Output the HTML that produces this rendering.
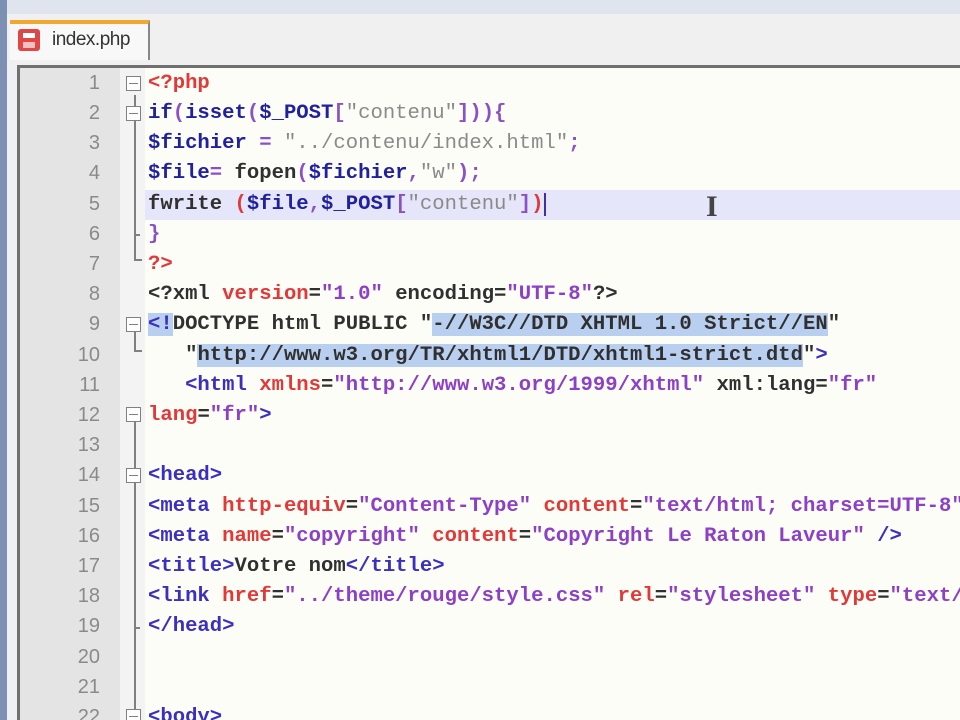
<!DOCTYPE html>
<html style="overflow:hidden;width:960px;height:720px"><head><style>
body{margin:0;width:960px;height:720px;overflow:hidden;background:#eef0f4;font-family:"Liberation Mono",monospace;position:relative}
.a{position:absolute}
.ln{position:absolute;left:20px;width:80px;text-align:right;color:#8a8a8a;font-size:20px;height:30px;line-height:30px;font-family:"Liberation Sans",sans-serif}
.c{position:absolute;left:148px;font-size:20.6px;height:30px;line-height:30px;white-space:pre;color:#333;font-weight:bold;max-width:812px;overflow:hidden}
.t{color:#3a2fc0}.r{color:#e23838}.s{color:#8d3fc8}.g{color:#8a8a8a;font-weight:normal}.k{color:#2020a0}.p{color:#8a50c8}.d{color:#303030}
.sel{background:#b9cff0}
.fb{position:absolute;left:126px;width:15px;height:15px;border:1.5px solid #808080;box-sizing:border-box;background:#fff}
.fb:after{content:"";position:absolute;left:2px;right:2px;top:5.5px;height:1.5px;background:#808080}
</style></head><body>
<div class="a" style="left:0;top:0;width:960px;height:14px;background:#dfe4ee;border-bottom:2px solid #c8ccd6"></div>
<div class="a" style="left:0;top:0;width:7px;height:720px;background:#7d8fb2"></div>
<div class="a" style="left:7px;top:14px;width:953px;height:54px;background:#f0f0f0"></div>
<div class="a" style="left:10px;top:20px;width:140px;height:40px;background:#f8f8f8;border-top:4px solid #f0a830;border-right:2px solid #888;box-sizing:border-box"></div>
<div class="a" style="left:18px;top:29px;width:22px;height:22px;background:#e04848;border-radius:3px"></div>
<div class="a" style="left:23px;top:33px;width:12px;height:5px;background:#fff"></div>
<div class="a" style="left:23px;top:42px;width:12px;height:6px;background:#f6c0c0"></div>
<div class="a" style="left:52px;top:29px;font-family:'Liberation Sans',sans-serif;font-size:19px;color:#333;letter-spacing:-0.5px">index.php</div>
<div class="a" style="left:17px;top:65px;width:943px;height:655px;background:#fdfdf7;border-left:3px solid #707070;border-top:3px solid #707070;box-sizing:border-box"></div>
<div class="a" style="left:20px;top:68px;width:100px;height:652px;background:#e4e4e4"></div>
<div class="a" style="left:120px;top:68px;width:25px;height:652px;background:#f3f3f3"></div>
<div class="a" style="left:145px;top:190px;width:815px;height:30px;background:#e6e6fa"></div>
<div class="a" style="left:134px;top:95px;width:1.5px;height:165px;background:#808080"></div>
<div class="a" style="left:134px;top:259px;width:8px;height:1.5px;background:#808080"></div>
<div class="a" style="left:134px;top:330px;width:1.5px;height:20px;background:#808080"></div>
<div class="a" style="left:134px;top:350px;width:8px;height:1.5px;background:#808080"></div>
<div class="a" style="left:134px;top:420px;width:1.5px;height:300px;background:#808080"></div>
<div class="a" style="left:134px;top:234px;width:6px;height:1.5px;background:#808080"></div>
<div class="a" style="left:134px;top:627px;width:6px;height:1.5px;background:#808080"></div>
<div class="fb" style="top:76px"></div><div class="fb" style="top:106px"></div>
<div class="fb" style="top:317px"></div><div class="fb" style="top:407px"></div>
<div class="fb" style="top:468px"></div><div class="fb" style="top:709px"></div>
<div class="ln" style="top:68px">1</div><div class="ln" style="top:98px">2</div><div class="ln" style="top:128px">3</div><div class="ln" style="top:158px">4</div><div class="ln" style="top:189px">5</div><div class="ln" style="top:219px">6</div><div class="ln" style="top:249px">7</div><div class="ln" style="top:279px">8</div><div class="ln" style="top:309px">9</div><div class="ln" style="top:340px">10</div><div class="ln" style="top:370px">11</div><div class="ln" style="top:400px">12</div><div class="ln" style="top:430px">13</div><div class="ln" style="top:460px">14</div><div class="ln" style="top:491px">15</div><div class="ln" style="top:521px">16</div><div class="ln" style="top:551px">17</div><div class="ln" style="top:581px">18</div><div class="ln" style="top:611px">19</div><div class="ln" style="top:642px">20</div><div class="ln" style="top:672px">21</div><div class="ln" style="top:702px;height:18px;overflow:hidden">22</div>
<div class="c" style="top:69px"><span class="r">&lt;?php</span></div>
<div class="c" style="top:99px"><span class="k">if</span><span class="p">(</span><span class="k">isset</span><span class="p">(</span><span class="k">$_POST</span><span class="p">[</span><span class="g">"contenu"</span><span class="p">])){</span></div>
<div class="c" style="top:129px"><span class="k">$fichier</span> <span class="p">=</span> <span class="g">"../contenu/index.html"</span><span class="p">;</span></div>
<div class="c" style="top:159px"><span class="k">$file</span><span class="p">=</span> <span class="d">fopen</span><span class="p">(</span><span class="k">$fichier</span><span class="p">,</span><span class="g">"w"</span><span class="p">);</span></div>
<div class="c" style="top:190px"><span class="d">fwrite</span> <span class="r">(</span><span class="k">$file</span><span class="p">,</span><span class="k">$_POST</span><span class="p">[</span><span class="g">"contenu"</span><span class="p">]</span><span class="r">)</span><span style="border-left:2px solid #4030a0"></span></div>
<div class="c" style="top:220px"><span class="p">}</span></div>
<div class="c" style="top:250px"><span class="r">?&gt;</span></div>
<div class="c" style="top:280px"><span class="d">&lt;?xml</span> <span class="r">version</span><span class="d">=</span><span class="s">"1.0"</span> <span class="d">encoding=</span><span class="s">"UTF-8"</span><span class="d">?&gt;</span></div>
<div class="c" style="top:310px"><span class="sel t">&lt;!</span><span class="d">DOCTYPE html PUBLIC "</span><span class="sel d">-//W3C//DTD XHTML 1.0 Strict//EN</span><span class="d">"</span></div>
<div class="c" style="top:341px"><span class="d">   "</span><span class="sel d">http://www.w3.org/TR/xhtml1/DTD/xhtml1-strict.dtd</span><span class="d">"</span><span class="t">&gt;</span></div>
<div class="c" style="top:371px">   <span class="t">&lt;html</span> <span class="r">xmlns</span><span class="d">=</span><span class="s">"http://www.w3.org/1999/xhtml"</span> <span class="d">xml:lang=</span><span class="s">"fr"</span></div>
<div class="c" style="top:401px"><span class="r">lang</span><span class="d">=</span><span class="s">"fr"</span><span class="t">&gt;</span></div>
<div class="c" style="top:461px"><span class="t">&lt;head&gt;</span></div>
<div class="c" style="top:492px"><span class="t">&lt;meta</span> <span class="r">http-equiv</span><span class="d">=</span><span class="s">"Content-Type"</span> <span class="r">content</span><span class="d">=</span><span class="s">"text/html; charset=UTF-8"</span></div>
<div class="c" style="top:522px"><span class="t">&lt;meta</span> <span class="r">name</span><span class="d">=</span><span class="s">"copyright"</span> <span class="r">content</span><span class="d">=</span><span class="s">"Copyright Le Raton Laveur"</span> <span class="t">/&gt;</span></div>
<div class="c" style="top:552px"><span class="t">&lt;title&gt;</span><span class="d">Votre nom</span><span class="t">&lt;/title&gt;</span></div>
<div class="c" style="top:582px"><span class="t">&lt;link</span> <span class="r">href</span><span class="d">=</span><span class="s">"../theme/rouge/style.css"</span> <span class="r">rel</span><span class="d">=</span><span class="s">"stylesheet"</span> <span class="r">type</span><span class="d">=</span><span class="s">"text/css"</span></div>
<div class="c" style="top:612px"><span class="t">&lt;/head&gt;</span></div>
<div class="c" style="top:703px;height:17px"><span class="t">&lt;body&gt;</span></div>
<div class="a" style="left:706px;top:192px;font-size:30px;color:#444;font-family:'Liberation Serif',serif;line-height:30px;font-weight:bold">I</div>
</body></html>
